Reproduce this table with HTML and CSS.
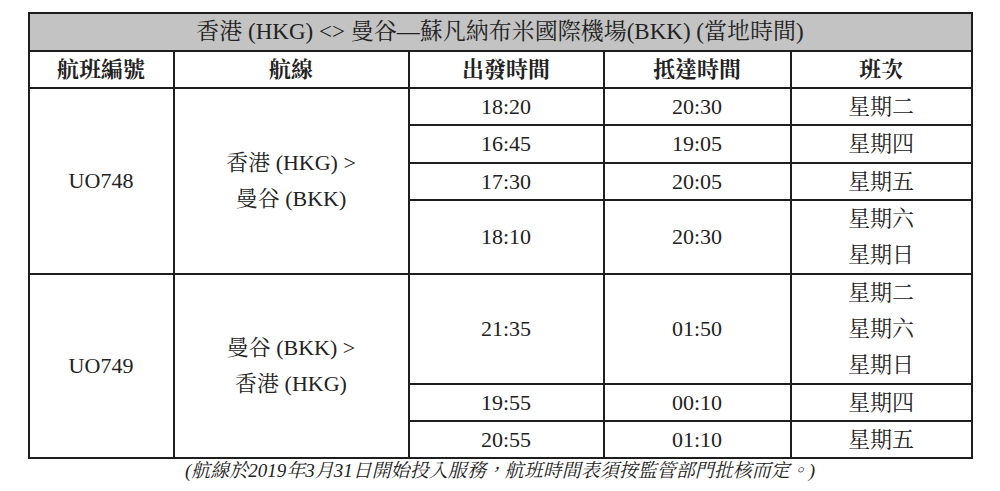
FILE: index.html
```html
<!DOCTYPE html>
<html lang="zh-Hant">
<head>
<meta charset="utf-8">
<title>香港 (HKG) &lt;&gt; 曼谷 航班時間表</title>
<link rel="stylesheet" href="styles.css">
</head>
<body>
<main class="page">
  <table class="schedule">
    <colgroup>
      <col class="c-flight">
      <col class="c-route">
      <col class="c-dep">
      <col class="c-arr">
      <col class="c-days">
    </colgroup>
    <thead>
      <tr class="title-row">
        <th colspan="5" class="title">香港 (HKG) &lt;&gt; 曼谷—蘇凡納布米國際機場(BKK) (當地時間)</th>
      </tr>
      <tr class="head-row">
        <th>航班編號</th>
        <th>航線</th>
        <th>出發時間</th>
        <th>抵達時間</th>
        <th>班次</th>
      </tr>
    </thead>
    <tbody>
      <tr class="r1">
        <td rowspan="4">UO748</td>
        <td rowspan="4" class="route">香港 (HKG) &gt;<br>曼谷 (BKK)</td>
        <td>18:20</td>
        <td>20:30</td>
        <td>星期二</td>
      </tr>
      <tr class="r1">
        <td>16:45</td>
        <td>19:05</td>
        <td>星期四</td>
      </tr>
      <tr class="r1">
        <td>17:30</td>
        <td>20:05</td>
        <td>星期五</td>
      </tr>
      <tr class="r2">
        <td>18:10</td>
        <td>20:30</td>
        <td class="multi">星期六<br>星期日</td>
      </tr>
      <tr class="r3">
        <td rowspan="3">UO749</td>
        <td rowspan="3" class="route">曼谷 (BKK) &gt;<br>香港 (HKG)</td>
        <td>21:35</td>
        <td>01:50</td>
        <td class="multi">星期二<br>星期六<br>星期日</td>
      </tr>
      <tr class="r1">
        <td>19:55</td>
        <td>00:10</td>
        <td>星期四</td>
      </tr>
      <tr class="r1">
        <td>20:55</td>
        <td>01:10</td>
        <td>星期五</td>
      </tr>
    </tbody>
  </table>
  <p class="note">(航線於2019年3月31日開始投入服務，航班時間表須按監管部門批核而定。)</p>
</main>
</body>
</html>
```

FILE: styles.css
```css
html, body {
  margin: 0;
  padding: 0;
  background: #ffffff;
}

body {
  font-family: "Liberation Serif", "Noto Serif CJK TC", "Noto Sans CJK TC", serif;
  color: #222222;
}

.page {
  display: flex;
  flex-direction: column;
  align-items: center;
  padding-top: 12px;
}

.schedule {
  border-collapse: collapse;
  table-layout: fixed;
  width: 943px;
}

.c-flight { width: 145px; }
.c-route  { width: 235px; }
.c-dep    { width: 195px; }
.c-arr    { width: 187px; }
.c-days   { width: 181px; }

.schedule th,
.schedule td {
  border: 2px solid #1e1e1e;
  padding: 0;
  text-align: center;
  vertical-align: middle;
  font-size: 22px;
  line-height: 35.25px;
}

.schedule th {
  font-weight: normal;
}

.title-row th {
  background: #c3c3c3;
  font-size: 23px;
  line-height: 35.5px;
}

.head-row th {
  font-weight: bold;
  line-height: 35.5px;
}

.schedule td.multi {
  line-height: 36px;
}

.schedule td.route {
  line-height: 36px;
}

.note {
  margin: 0;
  padding-top: 1px;
  font-size: 19px;
  line-height: 22px;
  font-style: italic;
  text-align: center;
  color: #222222;
}
```
